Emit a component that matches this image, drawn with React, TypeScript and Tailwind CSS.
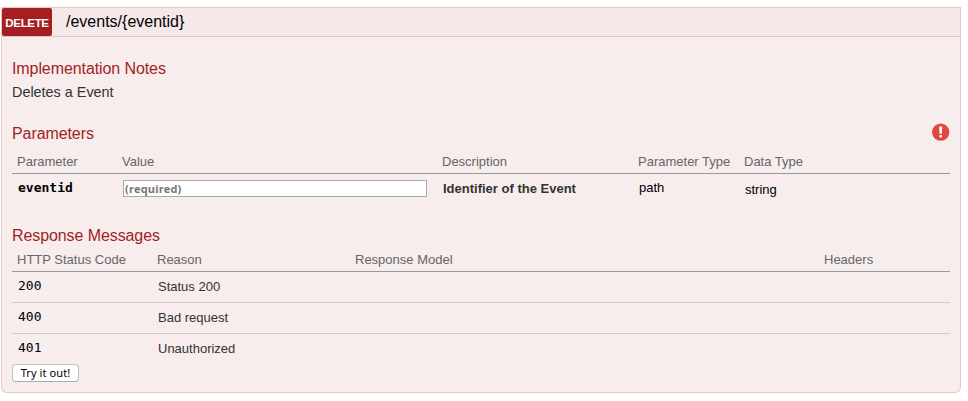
import React from 'react';

const params = 'grid grid-cols-[105px_320px_196px_106px_1fr] pl-[5px]';
const responses = 'grid grid-cols-[140px_198px_469px_1fr] pl-[5px]';
const mono = "font-['DejaVu_Sans_Mono',monospace] text-[13px] text-black";

const messages = [
  { code: '200', reason: 'Status 200' },
  { code: '400', reason: 'Bad request' },
  { code: '401', reason: 'Unauthorized' },
];

function Heading({ children }: { children: React.ReactNode }) {
  return <h4 className="text-[16px] leading-[20px] tracking-[-0.09px] text-[#a41e22]">{children}</h4>;
}

export default function App() {
  return (
    <main className="h-[401px] w-[968px] overflow-hidden bg-white pl-px pt-[7px] font-['Liberation_Sans',Arial,sans-serif] text-[13px] leading-[16px] whitespace-nowrap text-[#333]">
      <header className="flex h-[30px] w-[960px] items-center border border-[#e8c6c7] bg-[#f5e8e8]">
        <span className="flex h-[28px] w-[50px] items-center justify-center rounded-[2px] bg-[#a41e22] pt-[2px] text-[11.5px] font-bold tracking-[-0.35px] text-white">
          DELETE
        </span>
        <span className="pl-[14px] text-[16px] text-black">/events/&#123;eventid&#125;</span>
      </header>
      <section className="h-[356px] w-[960px] rounded-b-[6px] border border-t-0 border-[#e8c6c7] bg-[#f7eded] px-[10px] pt-[22px]">
        <Heading>Implementation Notes</Heading>
        <p className="mt-[4px] text-[14.4px] leading-[18px]">Deletes a Event</p>

        <div className="mt-[23px] flex h-[20px] items-start justify-between">
          <Heading>Parameters</Heading>
          <svg className="-mt-px h-[18px] w-[18px]" viewBox="0 0 18 18">
            <circle cx="8.7" cy="9.2" r="8.6" fill="#e1473d" />
            <path d="M7.2 3.6h3l-.2 7.2h-2.6z" fill="#fff" />
            <rect x="7.3" y="11.9" width="2.8" height="2.7" rx="1" fill="#fff" />
          </svg>
        </div>
        <div className={`${params} h-[30px] border-b border-[#999] pt-[10px] text-[#666]`}>
          <span>Parameter</span>
          <span>Value</span>
          <span>Description</span>
          <span>Parameter Type</span>
          <span>Data Type</span>
        </div>
        <div className={`${params} h-[52px] pt-[6px]`}>
          <span className={`${mono} pl-px font-bold`}>eventid</span>
          <input
            placeholder="(required)"
            className="ml-px h-[17px] w-[304px] border border-[#aaa] bg-white px-[1px] font-['Open_Sans','Noto_Sans',sans-serif] text-[11px] leading-[15px] font-bold tracking-[0.15px] placeholder:text-[#777]"
          />
          <span className="pl-px pt-px font-bold">Identifier of the Event</span>
          <span className="pl-px text-black">path</span>
          <span className="pl-px pt-[2px] text-black">string</span>
        </div>

        <Heading>Response Messages</Heading>
        <div className={`${responses} h-[26px] border-b border-[#999] pt-[6px] text-[#666]`}>
          <span>HTTP Status Code</span>
          <span>Reason</span>
          <span>Response Model</span>
          <span>Headers</span>
        </div>
        {messages.map(({ code, reason }) => (
          <div key={code} className={`${responses} h-[31px] border-b border-[#ccc] pt-[6px] last-of-type:border-b-0`}>
            <span className={`${mono} pl-px`}>{code}</span>
            <span className="pl-px pt-px">{reason}</span>
          </div>
        ))}
        <button className="-mt-px flex h-[18px] w-[67px] items-center justify-center rounded-[4px] border border-[#c3bfbf] border-b-[#aaa] bg-white font-['Noto_Sans',sans-serif] text-[11px] tracking-[0.1px] text-black">
          Try it out!
        </button>
      </section>
    </main>
  );
}
